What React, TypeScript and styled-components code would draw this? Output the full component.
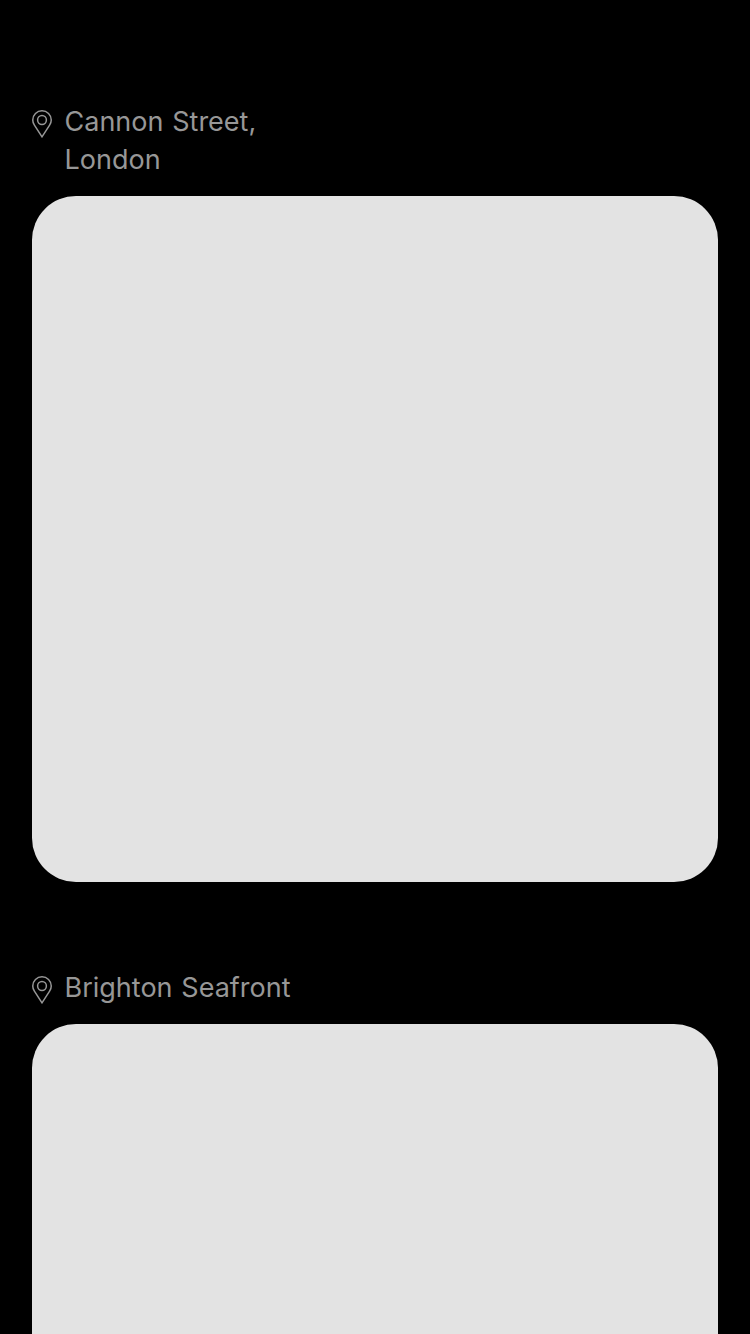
import React from "react";
import styled, { createGlobalStyle } from "styled-components";

const GlobalStyle = createGlobalStyle`
  body {
    margin: 0;
    background: #000;
    overflow: hidden;
  }
`;

const Feed = styled.main`
  box-sizing: border-box;
  height: 1334px;
  overflow: hidden;
  padding: 103px 32px 0;
  display: flex;
  flex-direction: column;
  gap: 87px;
  background: #000;
  font-family: Inter, "Liberation Sans", sans-serif;
`;

const Post = styled.article`
  display: flex;
  flex-direction: column;
  flex: none;
`;

const Location = styled.header`
  display: flex;
  align-items: flex-start;
  gap: 12.5px;
  margin-bottom: 17px;
  color: #979797;
`;

const PinIcon = styled.svg`
  flex: none;
  width: 20px;
  height: 28px;
  margin-top: 7px;
`;

const Place = styled.div`
  max-width: 240px;
  font-size: 27px;
  line-height: 38px;
  word-spacing: 1.2px;
  white-space: pre-line;
`;

const Photo = styled.div`
  height: 686px;
  border-radius: 44px;
  background: #e3e3e3;
`;

const posts = ["Cannon Street,\nLondon", "Brighton Seafront"];

function Pin() {
  return (
    <PinIcon viewBox="0 0 20 28" fill="none" stroke="currentColor" strokeWidth="1.5">
      <path d="M10 26.8L2.4 15.2C1.3 13.5.75 11.9.75 10a9.25 9.25 0 0 1 18.5 0c0 1.9-.55 3.5-1.65 5.2Z" />
      <circle cx="10" cy="10" r="4.4" />
    </PinIcon>
  );
}

export default function App() {
  return (
    <>
      <GlobalStyle />
      <Feed>
        {posts.map((place) => (
          <Post key={place}>
            <Location>
              <Pin />
              <Place>{place}</Place>
            </Location>
            <Photo />
          </Post>
        ))}
      </Feed>
    </>
  );
}
